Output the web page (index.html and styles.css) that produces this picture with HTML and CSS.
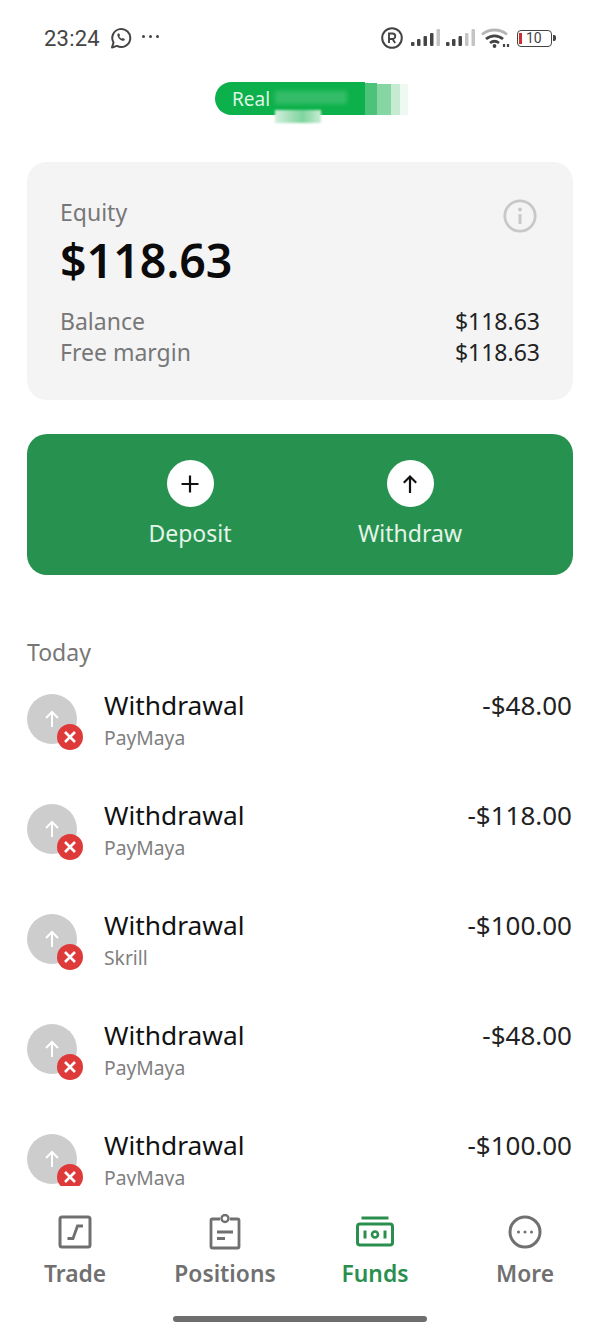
FILE: index.html
```html
<!DOCTYPE html>
<html lang="en">
<head>
  <meta charset="UTF-8">
  <title>Funds</title>
  <link rel="stylesheet" href="styles.css">
</head>
<body>
  <div class="phone">
    <div class="status-bar">
      <div class="status-left">
        <span class="clock">23:24</span>
        <svg class="ic-whatsapp" width="22" height="22" viewBox="0 0 22 22" fill="none" stroke="#444" stroke-width="2">
          <path d="M2 20.500l1.500-5A9 9 0 1 1 7 18.900z" stroke-linejoin="round"/>
          <path d="M7.600 6.800c-.8 1.600.3 3.600 1.800 5.100 1.500 1.400 3.400 2.300 4.900 1.500l.6-1.300-2.200-1.200-.9.900c-1-.4-2-1.400-2.500-2.500l.8-.9-1-2.200z" fill="#444" stroke="none"/>
        </svg>
        <span class="dots"><i></i><i></i><i></i></span>
      </div>
      <div class="status-right">
        <svg class="ic-reg" width="22" height="22" viewBox="0 0 22 22" fill="none" stroke="#444">
          <circle cx="11" cy="11" r="9.800" stroke-width="2"/>
          <path d="M8 16V6.500h3.500a2.700 2.700 0 0 1 0 5.500H8M11.500 12l2.700 4" stroke-width="1.900"/>
        </svg>
        <svg width="29" height="18" viewBox="0 0 29 18" fill="#444">
          <rect x="0" y="13" width="3.500" height="4" rx="1"/>
          <rect x="6" y="10" width="3.500" height="7" rx="1"/>
          <rect x="12.500" y="7" width="3.500" height="10" rx="1"/>
          <rect x="19" y="4" width="3.500" height="13" rx="1"/>
          <rect x="25.500" y="0" width="3.500" height="17" rx="1" fill="#c4c4c4"/>
        </svg>
        <svg width="29" height="18" viewBox="0 0 29 18" fill="#444">
          <rect x="0" y="13" width="3.500" height="4" rx="1"/>
          <rect x="6" y="10" width="3.500" height="7" rx="1"/>
          <rect x="12.500" y="7" width="3.500" height="10" rx="1"/>
          <rect x="19" y="4" width="3.500" height="13" rx="1" fill="#c4c4c4"/>
          <rect x="25.500" y="0" width="3.500" height="17" rx="1" fill="#c4c4c4"/>
        </svg>
        <svg width="30" height="20" viewBox="0 0 30 20" fill="none">
          <path d="M1 6.500C8 .5 19 .5 26 6.500" stroke="#b5b5b5" stroke-width="2.800"/>
          <path d="M5 11c5-4.300 12-4.300 17 0" stroke="#444" stroke-width="2.800"/>
          <path d="M9 15c3-2.400 6-2.400 9 0" stroke="#444" stroke-width="2.800"/>
          <circle cx="13.500" cy="18" r="1.900" fill="#444"/>
          <path d="M23 19v-3M27 19v-3" stroke="#444" stroke-width="2.200"/>
        </svg>
        <div class="battery">
          <div class="battery-body"><span class="battery-low"></span><span class="battery-num">10</span></div>
          <span class="battery-cap"></span>
        </div>
      </div>
    </div>

    <div class="account-row">
      <div class="account-pill">
        <span class="pill-label">Real</span>
        <!-- pixelated patch covering the account name -->
        <span class="smear smear-a"></span>
        <span class="smear smear-b"></span>
        <span class="smear smear-c"></span>
        <span class="smear smear-d"></span>
        <span class="smear smear-e"></span>
        <span class="smear smear-f"></span>
      </div>
    </div>

    <section class="equity-card">
      <div class="equity-head">
        <div>
          <div class="equity-label">Equity</div>
          <div class="equity-value">$118.63</div>
        </div>
        <svg class="ic-info" width="34" height="34" viewBox="0 0 34 34" fill="none" stroke="#c8c8c8">
          <circle cx="17" cy="17" r="15.200" stroke-width="2.800"/>
          <path d="M17 15v10" stroke-width="3"/>
          <circle cx="17" cy="10.500" r="1.900" fill="#c8c8c8" stroke="none"/>
        </svg>
      </div>
      <div class="equity-line"><span>Balance</span><b>$118.63</b></div>
      <div class="equity-line"><span>Free margin</span><b>$118.63</b></div>
    </section>

    <section class="actions">
      <div class="action">
        <span class="action-circle">
          <svg width="20" height="20" viewBox="0 0 20 20" stroke="#111" stroke-width="2.200"><path d="M1.500 10h17M10 1.500v17"/></svg>
        </span>
        <span>Deposit</span>
      </div>
      <div class="action">
        <span class="action-circle">
          <svg width="20" height="20" viewBox="0 0 20 20" fill="none" stroke="#111" stroke-width="2.200"><path d="M10 19V2.500M3.800 8.700L10 2.500l6.200 6.200"/></svg>
        </span>
        <span>Withdraw</span>
      </div>
    </section>

    <div class="list-wrap">
      <div class="day">Today</div>
      <div class="tx">
        <div class="tx-icon">
          <svg width="20" height="20" viewBox="0 0 20 20" fill="none" stroke="#fff" stroke-width="2"><path d="M10 18V3M4 9l6-6 6 6"/></svg>
          <span class="tx-fail"><svg width="14" height="14" viewBox="0 0 14 14" stroke="#fff" stroke-width="2.600"><path d="M2 2l10 10M12 2L2 12"/></svg></span>
        </div>
        <div class="tx-text"><div class="tx-title">Withdrawal</div><div class="tx-sub">PayMaya</div></div>
        <div class="tx-amount">-$48.00</div>
      </div>
      <div class="tx">
        <div class="tx-icon">
          <svg width="20" height="20" viewBox="0 0 20 20" fill="none" stroke="#fff" stroke-width="2"><path d="M10 18V3M4 9l6-6 6 6"/></svg>
          <span class="tx-fail"><svg width="14" height="14" viewBox="0 0 14 14" stroke="#fff" stroke-width="2.600"><path d="M2 2l10 10M12 2L2 12"/></svg></span>
        </div>
        <div class="tx-text"><div class="tx-title">Withdrawal</div><div class="tx-sub">PayMaya</div></div>
        <div class="tx-amount">-$118.00</div>
      </div>
      <div class="tx">
        <div class="tx-icon">
          <svg width="20" height="20" viewBox="0 0 20 20" fill="none" stroke="#fff" stroke-width="2"><path d="M10 18V3M4 9l6-6 6 6"/></svg>
          <span class="tx-fail"><svg width="14" height="14" viewBox="0 0 14 14" stroke="#fff" stroke-width="2.600"><path d="M2 2l10 10M12 2L2 12"/></svg></span>
        </div>
        <div class="tx-text"><div class="tx-title">Withdrawal</div><div class="tx-sub">Skrill</div></div>
        <div class="tx-amount">-$100.00</div>
      </div>
      <div class="tx">
        <div class="tx-icon">
          <svg width="20" height="20" viewBox="0 0 20 20" fill="none" stroke="#fff" stroke-width="2"><path d="M10 18V3M4 9l6-6 6 6"/></svg>
          <span class="tx-fail"><svg width="14" height="14" viewBox="0 0 14 14" stroke="#fff" stroke-width="2.600"><path d="M2 2l10 10M12 2L2 12"/></svg></span>
        </div>
        <div class="tx-text"><div class="tx-title">Withdrawal</div><div class="tx-sub">PayMaya</div></div>
        <div class="tx-amount">-$48.00</div>
      </div>
      <div class="tx">
        <div class="tx-icon">
          <svg width="20" height="20" viewBox="0 0 20 20" fill="none" stroke="#fff" stroke-width="2"><path d="M10 18V3M4 9l6-6 6 6"/></svg>
          <span class="tx-fail"><svg width="14" height="14" viewBox="0 0 14 14" stroke="#fff" stroke-width="2.600"><path d="M2 2l10 10M12 2L2 12"/></svg></span>
        </div>
        <div class="tx-text"><div class="tx-title">Withdrawal</div><div class="tx-sub">PayMaya</div></div>
        <div class="tx-amount">-$100.00</div>
      </div>
    </div>

    <nav class="tabbar">
      <div class="tab">
        <svg width="36" height="36" viewBox="0 0 36 36" fill="none" stroke="#707070">
          <rect x="3" y="3" width="30" height="30" rx="2" stroke-width="3"/>
          <path d="M10.500 24.500h5.500L20.500 12h5.500" stroke-width="2.800"/>
        </svg>
        <span>Trade</span>
      </div>
      <div class="tab">
        <svg width="36" height="36" viewBox="0 0 36 36" fill="none" stroke="#707070" stroke-width="2.800">
          <path d="M13 5H5.500a1.500 1.500 0 0 0-1.500 1.500v26a1.500 1.500 0 0 0 1.500 1.500h25a1.500 1.500 0 0 0 1.500-1.500v-26A1.500 1.500 0 0 0 30.500 5H23"/>
          <circle cx="18" cy="4.500" r="3.500" stroke-width="2.400"/>
          <path d="M10 18h16M10 24.500h8"/>
        </svg>
        <span>Positions</span>
      </div>
      <div class="tab tab-active">
        <svg width="38" height="36" viewBox="0 0 38 36" fill="none" stroke="#2a8f4e">
          <path d="M5.500 4h27" stroke-width="3"/>
          <rect x="1.500" y="10" width="35" height="21" rx="2.500" stroke-width="3"/>
          <circle cx="19" cy="20.500" r="3" stroke-width="2.600"/>
          <path d="M9 16.500v8M29 16.500v8" stroke-width="3"/>
        </svg>
        <span>Funds</span>
      </div>
      <div class="tab">
        <svg width="36" height="36" viewBox="0 0 36 36" fill="none" stroke="#707070">
          <circle cx="18" cy="18" r="15" stroke-width="3"/>
          <circle cx="11.500" cy="18" r="1.500" fill="#707070" stroke="none"/>
          <circle cx="18" cy="18" r="1.500" fill="#707070" stroke="none"/>
          <circle cx="24.500" cy="18" r="1.500" fill="#707070" stroke="none"/>
        </svg>
        <span>More</span>
      </div>
    </nav>
    <div class="home-bar-row"><div class="home-bar"></div></div>
  </div>
</body>
</html>
```

FILE: styles.css
```css
* {
  box-sizing: border-box;
}
html, body {
  margin: 0;
  padding: 0;
}
body {
  font-family: "Noto Sans", "Open Sans", sans-serif;
  background-color: #fff;
  color: #111;
}
.phone {
  width: 600px;
  height: 1333px;
  display: flex;
  flex-direction: column;
  overflow: hidden;
}

/* status bar */
.status-bar {
  height: 82px;
  flex: none;
  padding: 26px 44px 0 44px;
  display: flex;
  justify-content: space-between;
  align-items: flex-start;
}
.status-left, .status-right {
  display: flex;
  align-items: center;
  height: 24px;
}
.clock {
  font-family: Roboto, sans-serif;
  font-size: 22px;
  color: #444;
  letter-spacing: 0.2px;
}
.ic-whatsapp {
  margin-left: 10px;
}
.dots {
  display: flex;
  gap: 4px;
  margin-left: 10px;
  margin-bottom: 4px;
}
.dots i {
  width: 3px;
  height: 3px;
  border-radius: 50%;
  background: #444;
}
.status-right {
  gap: 6px;
}
.ic-reg {
  margin-right: 2px;
}
.battery {
  display: flex;
  align-items: center;
}
.battery-body {
  width: 35px;
  height: 17px;
  border: 1.500px solid #444;
  border-radius: 4px;
  display: flex;
  align-items: center;
  padding-left: 1px;
}
.battery-low {
  width: 3px;
  height: 11px;
  background: #cc2f2f;
}
.battery-num {
  font-family: Roboto, sans-serif;
  font-size: 14px;
  color: #444;
  margin-left: 4px;
}
.battery-cap {
  width: 3px;
  height: 6px;
  margin-left: 1px;
  background: #444;
  border-radius: 0 2px 2px 0;
}

/* account pill */
.account-row {
  height: 80px;
  flex: none;
  padding-left: 215px;
}
.account-pill {
  position: relative;
  width: 150px;
  height: 33px;
  border-radius: 17px 0 0 17px;
  background: #0cb14b;
  display: flex;
  align-items: center;
  padding-left: 17px;
}
.pill-label {
  font-size: 19px;
  color: #dff5e6;
}
.smear {
  position: absolute;
}
.smear-a {
  left: 60px;
  top: 9px;
  width: 72px;
  height: 13px;
  background: #35bc68;
  filter: blur(2px);
}
.smear-b {
  left: 150px;
  top: 1px;
  width: 12px;
  height: 32px;
  background: #4cc379;
}
.smear-c {
  left: 162px;
  top: 2px;
  width: 14px;
  height: 31px;
  background: #85d6a2;
}
.smear-d {
  left: 176px;
  top: 2px;
  width: 9px;
  height: 31px;
  background: #c6ebd2;
}
.smear-e {
  left: 185px;
  top: 2px;
  width: 8px;
  height: 31px;
  background: #eef9f1;
}
.smear-f {
  left: 60px;
  top: 28px;
  width: 46px;
  height: 13px;
  background: linear-gradient(to right, #d2eedb, #7fd49e 60%, #c9ecd4);
  filter: blur(1px);
}

/* equity card */
.equity-card {
  margin: 0 27px;
  height: 238px;
  flex: none;
  padding: 35px 33px 0 33px;
  background: #f4f4f5;
  border-radius: 20px;
}
.equity-head {
  display: flex;
  justify-content: space-between;
  align-items: flex-start;
  margin-bottom: 16px;
}
.equity-label {
  font-size: 23px;
  line-height: 30px;
  color: #777;
}
.equity-value {
  font-size: 46.500px;
  line-height: 60px;
  font-weight: 600;
  color: #0b0b0b;
  margin-top: 3px;
}
.ic-info {
  margin-top: 2px;
  margin-right: 3px;
}
.equity-line {
  display: flex;
  justify-content: space-between;
  font-size: 23px;
  line-height: 31px;
  color: #777;
}
.equity-line b {
  font-weight: 400;
  color: #222;
}

/* deposit / withdraw */
.actions {
  margin: 34px 27px 0 27px;
  height: 141px;
  flex: none;
  background: #27924f;
  border-radius: 20px;
  display: grid;
  grid-template-columns: 220px 220px;
  justify-content: center;
  padding-top: 26px;
}
.action {
  display: flex;
  flex-direction: column;
  align-items: center;
  font-size: 23px;
  line-height: 30px;
  color: #e4f4e9;
}
.action-circle {
  width: 47px;
  height: 47px;
  border-radius: 50%;
  background: #fff;
  display: flex;
  align-items: center;
  justify-content: center;
  margin-bottom: 11px;
}

/* transaction list */
.list-wrap {
  flex: 1;
  min-height: 0;
  overflow: hidden;
  padding: 0 28px 0 27px;
  margin-top: 62px;
}
.day {
  font-size: 23px;
  line-height: 30px;
  color: #777;
  margin-bottom: 27px;
}
.tx {
  height: 110px;
  display: flex;
  align-items: flex-start;
}
.tx-icon {
  position: relative;
  width: 50px;
  height: 50px;
  flex: none;
  border-radius: 50%;
  background: #cdcdcd;
  display: flex;
  align-items: center;
  justify-content: center;
}
.tx-fail {
  position: absolute;
  right: -6px;
  bottom: -6px;
  width: 26px;
  height: 26px;
  border-radius: 50%;
  background: #de3a3a;
  display: flex;
  align-items: center;
  justify-content: center;
}
.tx-text {
  margin-left: 27px;
  flex: 1;
}
.tx-title {
  font-size: 26.300px;
  line-height: 30px;
  margin-top: -4px;
  color: #111;
}
.tx-sub {
  font-size: 19.300px;
  line-height: 28px;
  margin-top: 4px;
  color: #808080;
}
.tx-amount {
  font-size: 26px;
  line-height: 30px;
  margin-top: -4px;
  color: #222;
}

/* bottom tabs */
.tabbar {
  flex: none;
  height: 120px;
  background: #fff;
  display: grid;
  grid-template-columns: repeat(4, 150px);
  padding-top: 28px;
}
.tab {
  display: flex;
  flex-direction: column;
  align-items: center;
  font-size: 22.800px;
  font-weight: 600;
  line-height: 32px;
  color: #707070;
}
.tab svg {
  margin-bottom: 8px;
}
.tab-active {
  color: #2a8f4e;
}
.home-bar-row {
  flex: none;
  height: 27px;
  padding-top: 10px;
  display: flex;
  justify-content: center;
}
.home-bar {
  width: 254px;
  height: 6px;
  border-radius: 3px;
  background: #6e6e6e;
}
```
